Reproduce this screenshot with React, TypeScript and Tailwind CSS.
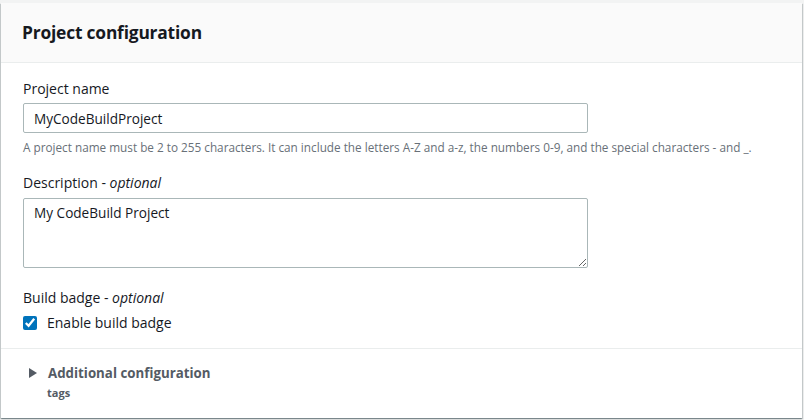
import { useState } from "react";

export default function App() {
  const [name, setName] = useState<string>("MyCodeBuildProject");
  const [desc, setDesc] = useState<string>("My CodeBuild Project");
  const [badge, setBadge] = useState<boolean>(true);

  return (
    <div
      className="w-[804px] h-[420px] bg-[#f2f3f3] pt-[3px] pl-[1px] pr-[2px] pb-[2px]"
      style={{ fontFamily: '"Open Sans", "Liberation Sans", sans-serif' }}
    >
      <div className="h-full bg-white flex flex-col shadow-[0_1px_1px_0_rgba(0,28,36,0.3),1px_1px_1px_0_rgba(0,28,36,0.15),-1px_1px_1px_0_rgba(0,28,36,0.15)]">
        {/* Header */}
        <div className="h-[60px] bg-[#fafafa] border-b border-[#eaeded] flex items-center px-[21px]">
          <h2 className="text-[17.4px] font-bold text-[#16191f] tracking-[-0.2px]">Project configuration</h2>
        </div>

        {/* Body */}
        <div className="px-[22px] pt-[15px] flex flex-col">
          <label className="text-[14px] text-[#16191f] leading-[22px]">Project name</label>
          <input
            value={name}
            onChange={(e) => setName(e.target.value)}
            className="mt-[3px] w-[565px] h-[30px] border border-[#aab7b8] rounded-[2px] px-[10px] text-[13.6px] text-[#16191f] outline-none"
          />
          <p className="mt-[6px] text-[11.75px] text-[#687078] leading-[16px]">
            A project name must be 2 to 255 characters. It can include the letters A-Z and a-z, the numbers 0-9, and the special characters - and _.
          </p>

          <label className="mt-[17px] text-[14px] text-[#16191f] leading-[22px]">
            Description - <i>optional</i>
          </label>
          <textarea
            value={desc}
            onChange={(e) => setDesc(e.target.value)}
            spellCheck={false}
            className="mt-[4px] w-[565px] h-[70px] border border-[#aab7b8] rounded-[2px] px-[10px] py-[4px] text-[13.6px] text-[#16191f] outline-none resize"
          />

          <label className="mt-[19px] text-[14px] text-[#16191f] leading-[22px]">
            Build badge - <i>optional</i>
          </label>
          <label className="mt-[4px] flex items-center gap-[10px] text-[14px] text-[#16191f] leading-[20px]">
            <input
              type="checkbox"
              checked={badge}
              onChange={(e) => setBadge(e.target.checked)}
              className="w-[14px] h-[14px] accent-[#0073bb]"
            />
            Enable build badge
          </label>
        </div>

        {/* Additional configuration */}
        <div className="mt-[15px] border-t border-[#eaeded] pl-[28px] pt-[14px]">
          <div className="flex items-center gap-[11px]">
            <svg width="8" height="10" viewBox="0 0 8 10">
              <path d="M0 0 L8 5 L0 10 Z" fill="#545b64" />
            </svg>
            <span className="text-[13.3px] font-bold text-[#545b64] leading-[20px]">Additional configuration</span>
          </div>
          <div className="pl-[18px] text-[11px] font-bold text-[#545b64] leading-[16px] mt-[2px]">tags</div>
        </div>
      </div>
    </div>
  );
}
